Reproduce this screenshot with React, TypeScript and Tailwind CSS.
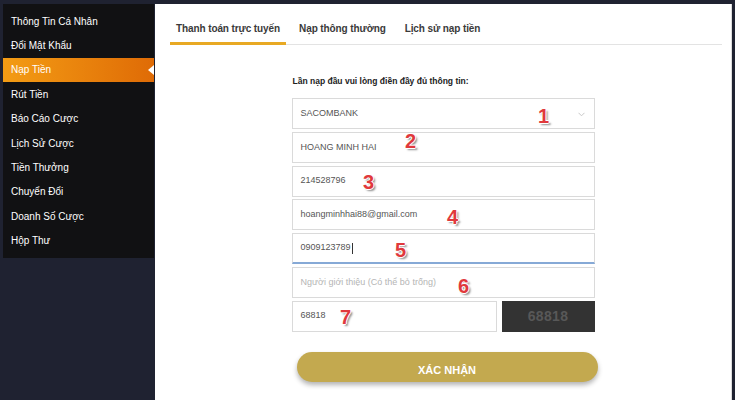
import React from 'react';

const menu = [
  'Thông Tin Cá Nhân',
  'Đổi Mật Khẩu',
  'Nạp Tiền',
  'Rút Tiền',
  'Báo Cáo Cược',
  'Lịch Sử Cược',
  'Tiền Thưởng',
  'Chuyển Đổi',
  'Doanh Số Cược',
  'Hộp Thư',
];

const tabs = ['Thanh toán trực tuyến', 'Nạp thông thường', 'Lịch sử nạp tiền'];

const fields = [
  { value: 'SACOMBANK', num: '1', x: 'left-[251px]', y: 'top-[17px]', select: true },
  { value: 'HOANG MINH HAI', num: '2', x: 'left-[118px]', y: 'top-[8px]' },
  { value: '214528796', num: '3', x: 'left-[76px]', y: 'top-[15px]' },
  { value: 'hoangminhhai88@gmail.com', num: '4', x: 'left-[160px]', y: 'top-[17px]' },
  { value: '0909123789', num: '5', x: 'left-[108px]', y: 'top-[16px]', focus: true },
  { value: '', placeholder: 'Người giới thiệu (Có thể bỏ trống)', num: '6', x: 'left-[171px]', y: 'top-[18px]' },
];

function Marker({ n, x, y }: { n: string; x: string; y: string }) {
  return (
    <span
      className={`absolute ${x} ${y} -translate-x-1/2 -translate-y-1/2 text-[20px] leading-none font-bold text-[#e0393c] [text-shadow:1px_0_0_#fff,-1px_0_0_#fff,0_1px_0_#fff,0_-1px_0_#fff,2px_2px_2px_rgba(0,0,0,0.45)]`}
    >
      {n}
    </span>
  );
}

export default function App() {
  return (
    <div className="h-[400px] w-[735px] overflow-hidden bg-[#1f2231] pt-[4px] pl-[3px] pr-[3px] flex items-start font-['Liberation_Sans',Arial,sans-serif]">
      {/* sidebar */}
      <div className="w-[151px] bg-[#111113] py-[5px] shrink-0">
        {menu.map((item) => {
          const active = item === 'Nạp Tiền';
          return (
            <div
              key={item}
              className={`relative h-[24.4px] flex items-center pl-[8px] text-[10px] text-white ${
                active ? 'bg-gradient-to-r from-[#f39c14] to-[#df6b06]' : ''
              }`}
            >
              {item}
              {active && (
                <span className="absolute right-0 top-1/2 -translate-y-1/2 w-0 h-0 border-y-[5px] border-y-transparent border-r-[6px] border-r-white" />
              )}
            </div>
          );
        })}
      </div>

      {/* content */}
      <div className="ml-px flex-1 h-[396px] bg-white border-r border-[#dcdcdc] pt-[18px]">
        <div className="ml-[15px] mr-[9px] flex gap-[7px] border-b border-[#e3e3e3]">
          {tabs.map((t, i) => (
            <div
              key={t}
              className={`-mb-px px-[6px] pb-[6px] leading-[14px] text-[10px] tracking-[-0.1px] font-bold text-[#3a3a3a] border-b-[3px] ${
                i === 0 ? 'border-[#e8a923]' : 'border-transparent'
              }`}
            >
              {t}
            </div>
          ))}
        </div>

        <div className="w-[303px] mx-auto pt-[30px]">
          <p className="pl-px text-[8.5px] font-bold text-[#222] leading-[12px] mb-[11px]">
            Lần nạp đầu vui lòng điền đầy đủ thông tin:
          </p>

          <div className="flex flex-col gap-[2.75px]">
            {fields.map((f) => (
              <div
                key={f.num}
                className={`relative h-[31px] flex items-center px-[8px] border border-[#dadada] text-[9px] ${
                  f.focus ? 'border-b-2 border-b-[#86a9d6]' : ''
                }`}
              >
                {f.value ? (
                  <span className="text-[#555]">{f.value}</span>
                ) : (
                  <span className="text-[#b5b5b5]">{f.placeholder}</span>
                )}
                {f.focus && <span className="ml-px w-px h-[11px] bg-[#333]" />}
                {f.select && (
                  <svg className="absolute right-[9px] top-[13px]" width="7" height="5" viewBox="0 0 7 5">
                    <path d="M0.5 0.8 L3.5 3.8 L6.5 0.8" fill="none" stroke="#c8c8c8" strokeWidth="1" />
                  </svg>
                )}
                <Marker n={f.num} x={f.x} y={f.y} />
              </div>
            ))}

            <div className="flex gap-[5px]">
              <div className="relative flex-1 h-[31px] flex items-center px-[8px] border border-[#dadada] text-[9px] text-[#555]">
                68818
                <Marker n="7" x="left-[53px]" y="top-[15px]" />
              </div>
              <div className="w-[93px] h-[31px] bg-[#333333] flex items-center justify-center text-[14px] font-bold text-[#585858] tracking-[0.3px]">
                68818
              </div>
            </div>
          </div>

          <button className="mt-[20px] ml-[5px] w-[301px] h-[30px] pt-[8px] rounded-full bg-[#c3a94f] shadow-[0_3px_5px_rgba(0,0,0,0.3)] text-white text-[11px] font-bold flex items-center justify-center">
            XÁC NHẬN
          </button>
        </div>
      </div>
    </div>
  );
}
